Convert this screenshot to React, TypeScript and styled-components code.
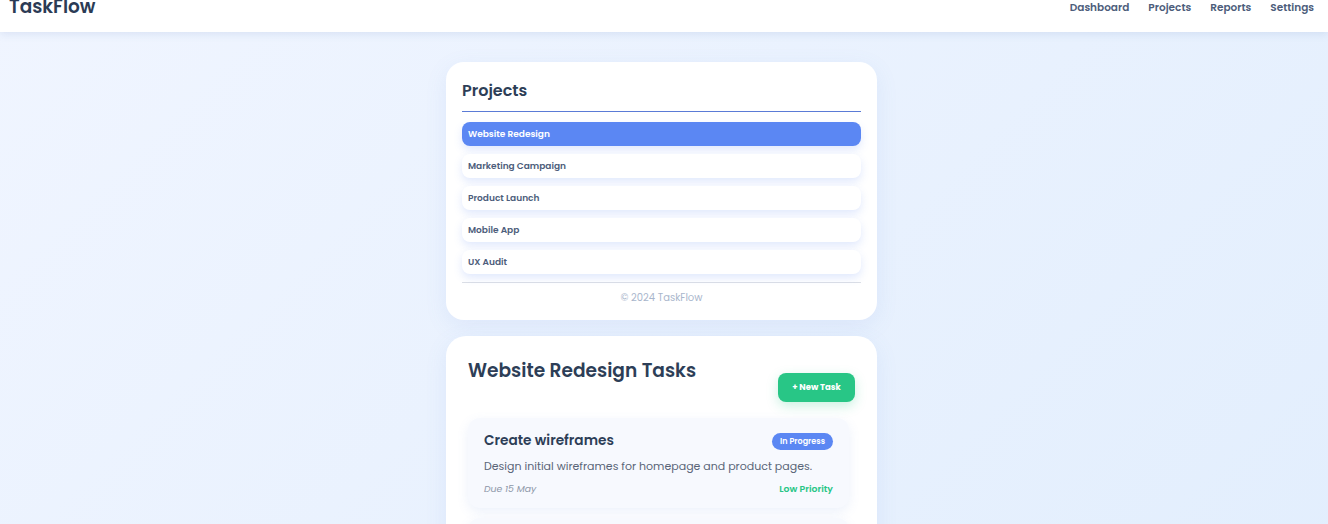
import React from 'react';
import styled, { createGlobalStyle } from 'styled-components';

const GlobalStyle = createGlobalStyle`
  * { box-sizing: border-box; }
  html, body {
    margin: 0;
    padding: 0;
  }
  body {
    font-family: 'Poppins', 'Open Sans', 'Noto Sans', sans-serif;
    background: linear-gradient(135deg, #f0f5ff 0%, #e2eefd 100%);
    min-height: 100vh;
    color: #2d3e57;
    overflow: hidden;
  }
`;

const Header = styled.header`
  height: 32px;
  background: #ffffff;
  display: flex;
  justify-content: space-between;
  align-items: flex-start;
  padding: 0 14px 0 9px;
  box-shadow: 0 2px 8px rgba(90, 120, 180, 0.15);
`;

const Logo = styled.div`
  font-size: 18.5px;
  font-weight: 600;
  color: #2b3b55;
  line-height: 20px;
  margin-top: -3px;
`;

const Nav = styled.nav`
  display: flex;
  gap: 19px;
  padding-top: 1px;
`;

const NavLink = styled.a`
  font-size: 10.5px;
  font-weight: 600;
  color: #4d5d7b;
  line-height: 14px;
  text-decoration: none;
`;

const Main = styled.main`
  display: flex;
  flex-direction: column;
  align-items: center;
  gap: 16px;
  padding: 30px 0 0;
  margin-left: -5px;
`;

const Card = styled.section`
  width: 431px;
  background: #ffffff;
  border-radius: 18px;
  box-shadow: 0 6px 22px rgba(100, 140, 220, 0.1);
`;

const ProjectsCard = styled(Card)`
  padding: 16px 16px 15px;
`;

const CardTitle = styled.h2`
  margin: 0;
  font-size: 16px;
  font-weight: 600;
  color: #2d3e57;
  line-height: 24px;
  padding: 1px 0 8px;
  border-bottom: 1px solid #5b7bd6;
`;

const ProjectList = styled.ul`
  list-style: none;
  margin: 10px 0 0;
  padding: 0;
  display: flex;
  flex-direction: column;
  gap: 8px;
`;

const ProjectItem = styled.li<{ $active?: boolean }>`
  height: 24px;
  border-radius: 8px;
  padding: 0 6px;
  display: flex;
  align-items: center;
  font-size: 9px;
  font-weight: 600;
  background: ${p => (p.$active ? '#5b87f3' : '#ffffff')};
  color: ${p => (p.$active ? '#ffffff' : '#4d5d7b')};
  box-shadow: 0 4px 8px rgba(91, 135, 243, 0.18);
`;

const Footer = styled.div`
  margin-top: 8px;
  border-top: 1px solid #dcdfe6;
  padding-top: 8px;
  text-align: center;
  font-size: 10px;
  color: #a9b6cc;
  line-height: 14px;
`;

const TasksCard = styled(Card)`
  padding: 22px 22px 20px;
  min-height: 200px;
  border-radius: 20px;
`;

const TasksHeader = styled.div`
  display: flex;
  justify-content: space-between;
  align-items: flex-start;
  margin-bottom: 16px;
`;

const TasksTitle = styled.h1`
  margin: 0;
  font-size: 18.6px;
  font-weight: 600;
  color: #2d3e57;
  line-height: 26px;
`;

const NewTaskButton = styled.button`
  margin-top: 15px;
  height: 29px;
  width: 77px;
  border: none;
  border-radius: 8px;
  background: #28c686;
  color: #ffffff;
  font-family: inherit;
  font-size: 8.5px;
  font-weight: 700;
  box-shadow: 0 4px 12px rgba(40, 198, 134, 0.25);
`;

const TaskList = styled.div`
  display: flex;
  flex-direction: column;
  gap: 10px;
  padding-right: 6px;
`;

const TaskCard = styled.article`
  background: #f7f9fe;
  border-radius: 12px;
  padding: 13px 16px 12px;
  box-shadow: 0 4px 12px rgba(100, 140, 220, 0.12);
  min-height: 90px;
`;

const TaskTop = styled.div`
  display: flex;
  justify-content: space-between;
  align-items: center;
`;

const TaskName = styled.h3`
  margin: 0;
  font-size: 13.7px;
  font-weight: 600;
  color: #2d3e57;
  line-height: 20px;
`;

const Badge = styled.span<{ $color: string }>`
  background: ${p => p.$color};
  color: #ffffff;
  font-size: 8px;
  font-weight: 600;
  border-radius: 10px;
  padding: 3px 8px;
  line-height: 11px;
`;

const TaskDesc = styled.p`
  margin: 7px 0 0;
  font-size: 11px;
  color: #5a6578;
  line-height: 16px;
`;

const TaskMeta = styled.div`
  display: flex;
  justify-content: space-between;
  margin-top: 8px;
  font-size: 9.3px;
  line-height: 14px;
`;

const Due = styled.span`
  font-style: italic;
  color: #8d97a8;
`;

const Priority = styled.span<{ $color: string }>`
  color: ${p => p.$color};
  font-weight: 600;
`;

const projects = ['Website Redesign', 'Marketing Campaign', 'Product Launch', 'Mobile App', 'UX Audit'];

const tasks = [
  {
    name: 'Create wireframes',
    status: 'In Progress',
    desc: 'Design initial wireframes for homepage and product pages.',
    due: 'Due 15 May',
    priority: 'Low Priority',
  },
  {
    name: 'Design system',
    status: 'To Do',
    desc: 'Build a reusable component library.',
    due: 'Due 22 May',
    priority: 'Medium Priority',
  },
];

export default function App() {
  return (
    <>
      <GlobalStyle />
      <Header>
        <Logo>TaskFlow</Logo>
        <Nav>
          <NavLink>Dashboard</NavLink>
          <NavLink>Projects</NavLink>
          <NavLink>Reports</NavLink>
          <NavLink>Settings</NavLink>
        </Nav>
      </Header>
      <Main>
        <ProjectsCard>
          <CardTitle>Projects</CardTitle>
          <ProjectList>
            {projects.map((p, i) => (
              <ProjectItem key={p} $active={i === 0}>{p}</ProjectItem>
            ))}
          </ProjectList>
          <Footer>© 2024 TaskFlow</Footer>
        </ProjectsCard>
        <TasksCard>
          <TasksHeader>
            <TasksTitle>Website Redesign Tasks</TasksTitle>
            <NewTaskButton>+ New Task</NewTaskButton>
          </TasksHeader>
          <TaskList>
            {tasks.map(t => (
              <TaskCard key={t.name}>
                <TaskTop>
                  <TaskName>{t.name}</TaskName>
                  <Badge $color="#5b87f3">{t.status}</Badge>
                </TaskTop>
                <TaskDesc>{t.desc}</TaskDesc>
                <TaskMeta>
                  <Due>{t.due}</Due>
                  <Priority $color="#28c686">{t.priority}</Priority>
                </TaskMeta>
              </TaskCard>
            ))}
          </TaskList>
        </TasksCard>
      </Main>
    </>
  );
}
